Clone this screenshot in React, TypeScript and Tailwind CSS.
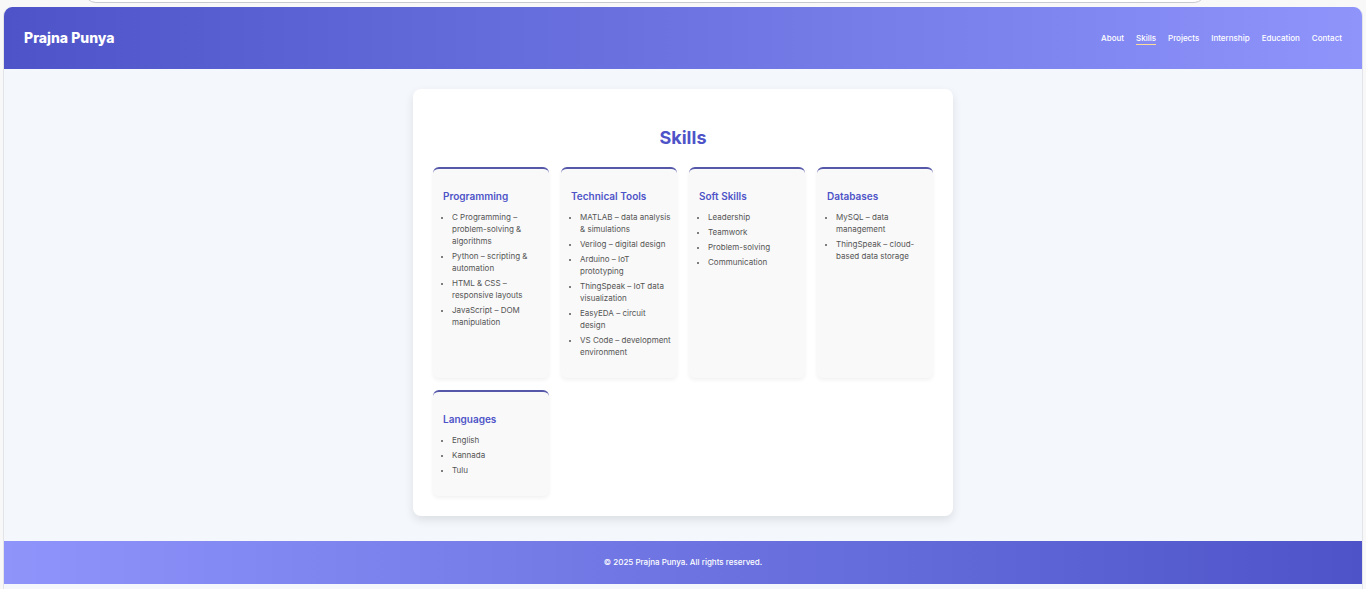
const navItems = ["About", "Skills", "Projects", "Internship", "Education", "Contact"];

const skillGroups = [
  {
    title: "Programming",
    items: [
      "C Programming – problem-solving & algorithms",
      "Python – scripting & automation",
      "HTML & CSS – responsive layouts",
      "JavaScript – DOM manipulation",
    ],
  },
  {
    title: "Technical Tools",
    items: [
      "MATLAB – data analysis & simulations",
      "Verilog – digital design",
      "Arduino – IoT prototyping",
      "ThingSpeak – IoT data visualization",
      "EasyEDA – circuit design",
      "VS Code – development environment",
    ],
  },
  {
    title: "Soft Skills",
    items: ["Leadership", "Teamwork", "Problem-solving", "Communication"],
  },
  {
    title: "Databases",
    items: ["MySQL – data management", "ThingSpeak – cloud-based data storage"],
  },
  { title: "Languages", items: ["English", "Kannada", "Tulu"] },
];

function Header() {
  return (
    <header className="flex items-center justify-between bg-linear-to-r from-[#4e54c8] to-[#8f94fb] px-5 py-[15px] text-white">
      <h1 className="text-[14px] leading-8 font-extrabold">Prajna Punya</h1>
      <nav aria-label="Main" className="flex gap-3 text-[8px] leading-3 font-medium">
        {navItems.map((item) => (
          <a
            key={item}
            href={`#${item.toLowerCase()}`}
            className={item === "Skills" ? "border-b border-[#ffdd99]" : "border-b border-transparent"}
          >
            {item}
          </a>
        ))}
      </nav>
    </header>
  );
}

function SkillCard({ title, items }: { title: string; items: string[] }) {
  return (
    <article className="rounded-md border-t-2 border-[#5558a8] bg-[#f9f9f9] pt-[19px] pr-[5px] pb-[17px] pl-[10px] shadow-[0_2px_4px_rgba(0,0,0,0.06)]">
      <h3 className="text-[10px] leading-4 font-semibold text-[#4e54c8]">{title}</h3>
      <ul className="mt-[7px] list-disc pl-[9px] text-[8px] leading-3 text-[#555] marker:text-[6px]">
        {items.map((item) => (
          <li key={item} className="mb-[3px]">
            {item}
          </li>
        ))}
      </ul>
    </article>
  );
}

export default function App() {
  return (
    <div className="min-h-screen bg-[#f8f8f8] font-['Inter',sans-serif]">
      <div className="h-[7px] pr-[160px] pl-[84px]">
        <div className="flex h-[3px] items-end overflow-hidden">
          <div className="h-6 grow rounded-b-xl border border-[#c9c9d0] bg-white" />
        </div>
      </div>
      <div className="mx-[3px] overflow-hidden rounded-t-[9px] border-x border-[#e2e4e8] bg-[#f4f7fc]">
        <Header />
        <main className="px-5 pt-5 pb-[25px]">
          <section
            id="skills"
            className="mx-auto max-w-[540px] rounded-lg bg-white px-5 pt-[35px] pb-5 shadow-[0_4px_10px_rgba(0,0,0,0.1)]"
          >
            <h2 className="text-center text-[18px] leading-7 font-bold text-[#4e54c8]">Skills</h2>
            <div className="mt-[15px] grid grid-cols-[repeat(auto-fit,minmax(110px,1fr))] gap-3">
              {skillGroups.map((group) => (
                <SkillCard key={group.title} title={group.title} items={group.items} />
              ))}
            </div>
          </section>
        </main>
        <footer className="bg-linear-to-r from-[#8f94fb] to-[#4e54c8] pt-[15px] pb-4 text-center text-[8px] leading-3 font-medium text-white">
          <p>© 2025 Prajna Punya. All rights reserved.</p>
        </footer>
        <div className="h-[5px]" />
      </div>
    </div>
  );
}
